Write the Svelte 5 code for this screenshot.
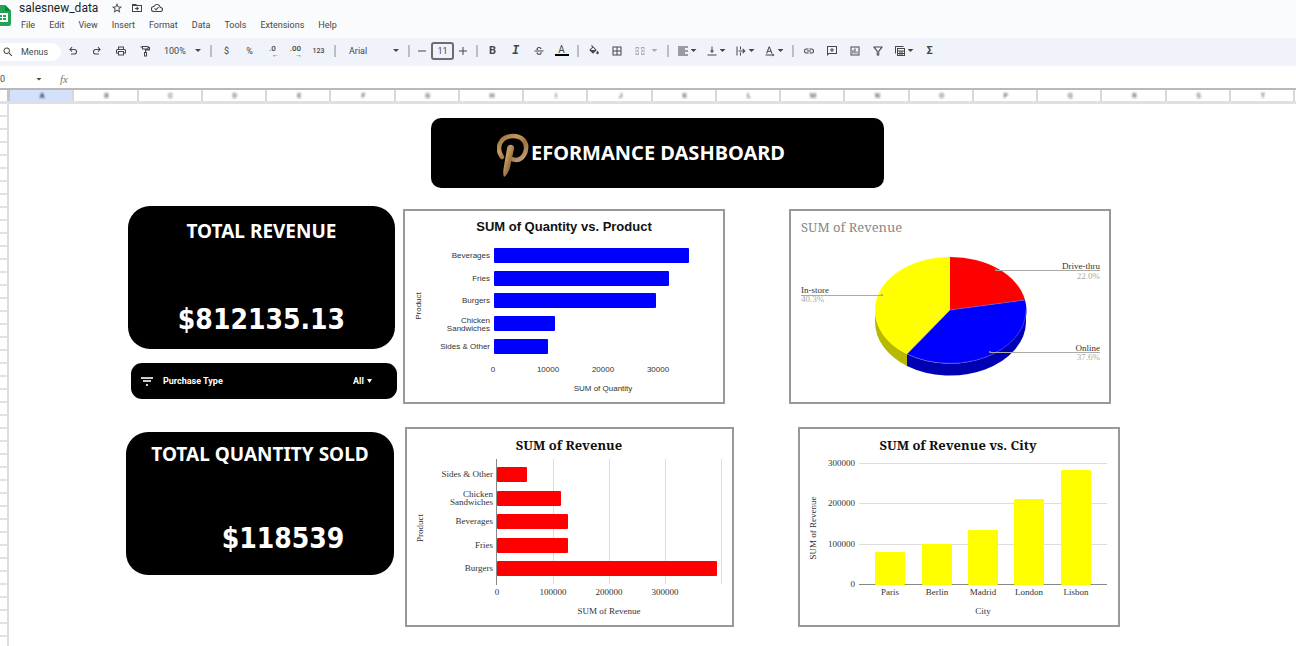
<script>
  const menus = ['File', 'Edit', 'View', 'Insert', 'Format', 'Data', 'Tools', 'Extensions', 'Help'];
  const columns = 'ABCDEFGHIJKLMNOPQRST'.split('');
  const rows = Array.from({ length: 42 }, (_, i) => i + 1);

  const icons = {
    undo: 'M8 19v-2h6.5a3.6 3.6 0 0 0 0-7.2H8l2.900 2.900L9.500 14 4.300 8.800 9.500 3.600l1.400 1.400L8 7.800h6.500a5.600 5.600 0 0 1 0 11.200z',
    redo: 'M16 19v-2H9.500a3.600 3.600 0 0 1 0-7.200H16l-2.900 2.900 1.400 1.300 5.200-5.200-5.200-5.200-1.400 1.400L16 7.800H9.500a5.600 5.600 0 0 0 0 11.200z',
    print: 'M19 8h-1V3H6v5H5a3 3 0 0 0-3 3v6h4v4h12v-4h4v-6a3 3 0 0 0-3-3zM8 5h8v3H8zm8 14H8v-5h8zm4-4h-2v-3H6v3H4v-4a1 1 0 0 1 1-1h14a1 1 0 0 1 1 1z',
    paint: 'M3 3h3V2h13v2h3v7h-8v3h2v9h-6v-9h2V9h8V6h-1v3H6V5H3zm5 1v3h9V4zm4 12v5h2v-5z',
    strike: 'M3 11h18v2H3z M7 9a4.500 4.500 0 0 1 5-5c3 0 4.800 1.500 5 4h-2.500c-.2-1.300-1-2-2.500-2-1.600 0-2.500.8-2.500 2 0 .8.300 1.300 1 2H7.200zM7 15h2.500c.2 1.800 1.200 2.500 2.700 2.500 1.700 0 2.600-.8 2.600-2l-.2-1h2.500c.5 3.200-1.500 5.200-4.900 5.200-3.200 0-5-1.700-5.200-4.700z',
    fill: 'M16.600 9 7.600 0 6.200 1.400l2.400 2.400-5.200 5.100a1.500 1.500 0 0 0 0 2.200l5.500 5.500a1.500 1.500 0 0 0 2.200 0l5.500-5.500a1.500 1.500 0 0 0-.1-2.100zM5.200 10 10 5.200l4.800 4.800zM19 11.500s-2.500 2.700-2.500 4.500a2.500 2.500 0 0 0 5 0c0-1.800-2.500-4.500-2.500-4.500z',
    borders: 'M3 3v18h18V3zm8 16H5v-6h6zm0-8H5V5h6zm8 8h-6v-6h6zm0-8h-6V5h6z',
    merge: 'M3 4h7v5H8V6H5v3H3zm11 0h7v5h-2V6h-3v3h-2zM3 15h2v3h3v-3h2v5H3zm16 0h2v5h-7v-5h2v3h3zM2 11h5V9l3 3-3 3v-2H2zm20 0h-5V9l-3 3 3 3v-2h5z',
    align: 'M2 3h20v2H2zm0 4h14v2H2zm0 4h20v2H2zm0 4h14v2H2zm0 4h20v2H2z',
    valign: 'M16 11h-3V3h-2v8H8l4 5zM3 19v2h18v-2z',
    wrap: 'M3 3h2v18H3zm7 0h2v6h-2zm0 12h2v6h-2zM7 11h10l-2.500-2.500L16 7l5 5-5 5-1.500-1.500L17 13H7z',
    rotate: 'M4 17 9.500 3h2L17 17h-2.300l-1.300-3.500H7.600L6.300 17zm4.300-5.500h4.400l-2.200-6zM3 19h14v-2l4 3-4 3v-2H3z',
    link: 'M3.900 12A3.100 3.100 0 0 1 7 8.900h4V7H7a5 5 0 0 0 0 10h4v-1.900H7A3.100 3.100 0 0 1 3.900 12zM8 13h8v-2H8zm9-6h-4v1.900h4a3.100 3.100 0 0 1 0 6.200h-4V17h4a5 5 0 0 0 0-10z',
    comment: 'M2 2h20v16H6l-4 4zm2 2v13l1-1h15V4zm7 2h2v3h3v2h-3v3h-2v-3H8V9h3z',
    chart: 'M3 3h18v18H3zm2 2v14h14V5zm2 5h2v7H7zm4-3h2v10h-2zm4 6h2v4h-2z',
    filter: 'M3 3h18v2l-6.500 8v8h-5v-8L3 5zm3 2 5.500 7v7h1v-7L18 5z',
    views: 'M2 2h17v2H4v13H2zm4 4h16v16H6zm2 2v3h12V8zm0 5v3h3v-3zm5 0v3h2v-3zm4 0v3h3v-3zm-9 5v2h3v-2zm5 0v2h2v-2zm4 0v2h3v-2z',
    star: 'm12 2 3 6.800 7.200.6-5.500 4.800 1.700 7.200-6.400-3.900-6.400 3.900 1.700-7.200L1.800 9.400 9 8.800zm0 4.700-1.700 3.800-4 .4 3 2.700-.9 4 3.600-2.200 3.600 2.200-.9-4 3-2.700-4-.4z',
    move: 'M2 4h8l2 2h10v14H2zm2 4v10h16V8zm8 1 4 4-4 4-1.400-1.400L12 14H8v-2h4l-1.400-1.600z',
    cloud: 'M19.400 10A7.500 7.500 0 0 0 5.400 8 6 6 0 0 0 6 20h13a5 5 0 0 0 .4-10zM19 18H6a4 4 0 0 1-.4-8l1.100-.1.500-1A5.500 5.500 0 0 1 17.400 10.400l.3 1.500 1.500.1A3 3 0 0 1 19 18zm-9-3.800-2.100-2.100-1.400 1.400L10 17l6-6-1.400-1.400z',
    search: 'M15.500 14h-.8l-.3-.3a6.500 6.500 0 1 0-.7.7l.3.300v.8l5 5 1.500-1.500zm-6 0a4.500 4.500 0 1 1 0-9 4.500 4.500 0 0 1 0 9z'
  };

  const quantity = [
    { lines: ['Beverages'], y: 39, w: 195 },
    { lines: ['Fries'], y: 62, w: 175 },
    { lines: ['Burgers'], y: 84, w: 162 },
    { lines: ['Chicken', 'Sandwiches'], y: 107, w: 61 },
    { lines: ['Sides & Other'], y: 130, w: 54 }
  ];
  const revenue = [
    { lines: ['Sides & Other'], y: 40, w: 30 },
    { lines: ['Chicken', 'Sandwiches'], y: 64, w: 64 },
    { lines: ['Beverages'], y: 87, w: 71 },
    { lines: ['Fries'], y: 111, w: 71 },
    { lines: ['Burgers'], y: 134, w: 220 }
  ];
  const cities = [
    { name: 'Paris', x: 77, top: 125 },
    { name: 'Berlin', x: 124, top: 117 },
    { name: 'Madrid', x: 170, top: 103 },
    { name: 'London', x: 216, top: 72 },
    { name: 'Lisbon', x: 263, top: 43 }
  ];
</script>

{#snippet icon(name)}
  <svg class="icon" viewBox="0 0 24 24" aria-hidden="true"><path fill-rule="evenodd" d={icons[name]} /></svg>
{/snippet}

{#snippet drop(name, label)}
  <button class="drop" aria-label={label}>{@render icon(name)}<i class="caret"></i></button>
{/snippet}

<header>
  <div class="top">
    <svg class="logo" viewBox="0 0 11 22" aria-hidden="true">
      <path d="M0 0h5l6 6v13a2 2 0 0 1-2 2H0z" fill="#23a455" />
      <path d="M5 0l6 6H5z" fill="#12813c" />
      <path d="M0 8h8v9H0v-2h2v-2H0v-1h2v-2H0zM3 10v2h3v-2zm0 3v2h3v-2z" fill="#fff" fill-rule="evenodd" />
    </svg>
    <div class="heads">
      <div class="file">
        <h1>salesnew_data</h1>
        <button aria-label="Star">{@render icon('star')}</button>
        <button aria-label="Move">{@render icon('move')}</button>
        <button aria-label="Saved to Drive">{@render icon('cloud')}</button>
      </div>
      <nav>
        {#each menus as item}<button>{item}</button>{/each}
      </nav>
    </div>
  </div>

  <div class="toolbar">
    <label class="search">{@render icon('search')}<input aria-label="Menus" placeholder="Menus" /></label>
    <button class="wide" aria-label="Undo">{@render icon('undo')}</button>
    <button class="wide" aria-label="Redo">{@render icon('redo')}</button>
    <button class="wide" aria-label="Print">{@render icon('print')}</button>
    <button class="wide" aria-label="Paint format">{@render icon('paint')}</button>
    <span class="pick zoom"><select aria-label="Zoom"><option>100%</option></select><i class="caret"></i></span>
    <i class="sep"></i>
    <button>$</button>
    <button>%</button>
    <button class="dec" aria-label="Decrease decimal places"><span>.0</span><small>←</small></button>
    <button class="dec" aria-label="Increase decimal places"><span>.00</span><small>→</small></button>
    <button class="num">123</button>
    <i class="sep"></i>
    <span class="pick font"><select aria-label="Font"><option>Arial</option></select><i class="caret"></i></span>
    <i class="sep"></i>
    <button class="step" aria-label="Decrease font size"><svg class="icon" viewBox="0 0 24 24"><path d="M4 11h16v2H4z" /></svg></button>
    <input class="size" aria-label="Font size" value="11" />
    <button class="step" aria-label="Increase font size"><svg class="icon" viewBox="0 0 24 24"><path d="M4 11h7V4h2v7h7v2h-7v7h-2v-7H4z" /></svg></button>
    <i class="sep"></i>
    <button class="bold">B</button>
    <button class="italic">I</button>
    <button aria-label="Strikethrough">{@render icon('strike')}</button>
    <button class="color"><span>A</span></button>
    <i class="sep"></i>
    <button aria-label="Fill color">{@render icon('fill')}</button>
    <button aria-label="Borders">{@render icon('borders')}</button>
    <button class="drop merge" aria-label="Merge cells">{@render icon('merge')}<i class="caret"></i></button>
    <i class="sep"></i>
    {@render drop('align', 'Horizontal align')}
    {@render drop('valign', 'Vertical align')}
    {@render drop('wrap', 'Text wrapping')}
    {@render drop('rotate', 'Text rotation')}
    <i class="sep"></i>
    <button aria-label="Insert link">{@render icon('link')}</button>
    <button aria-label="Insert comment">{@render icon('comment')}</button>
    <button aria-label="Insert chart">{@render icon('chart')}</button>
    <button aria-label="Create a filter">{@render icon('filter')}</button>
    {@render drop('views', 'Table views')}
    <button class="bold">Σ</button>
  </div>

  <div class="formula">
    <input class="cell" aria-label="Name box" value="0" />
    <i class="caret"></i>
    <label for="fx">fx</label>
    <input id="fx" />
  </div>
</header>

<div class="letters">
  <span class="corner"></span>
  {#each columns as c, i}<span class="letter" class:active={i === 0}><b>{c}</b></span>{/each}
</div>

<div class="sheet">
  <div class="numbers">{#each rows as r (r)}<i></i>{/each}</div>
  <main>
    <section class="row banner-row">
      <h2 class="banner">
        <svg viewBox="0 0 32 46" role="img" aria-label="P">
          <defs>
            <linearGradient id="gold" x1="0" y1="0" x2="1" y2="1">
              <stop offset="0" stop-color="#9a6f3c" />
              <stop offset=".35" stop-color="#c39a5f" />
              <stop offset=".6" stop-color="#9c7141" />
              <stop offset="1" stop-color="#c8a585" />
            </linearGradient>
          </defs>
          <path d="M5 24C-1 16 2 3 16 3c9 0 14 6 13 13-1 8-7 13-14 10" fill="none" stroke="url(#gold)" stroke-width="4.500" stroke-linecap="round" />
          <path d="M10 15c1-5 8-4 7 1l-4 18c-1 5-4 9-6 10-1-2-1-7 0-11z" fill="url(#gold)" />
        </svg>
        <span>EFORMANCE DASHBOARD</span>
      </h2>
    </section>

    <section class="row first">
      <div class="side">
        <article class="card">
          <h3>TOTAL REVENUE</h3>
          <p>$812135.13</p>
        </article>
        <div class="slicer">
          <svg viewBox="0 0 12 9" aria-hidden="true"><path d="M0 0h12v2H0zM2 3h8v2H2zM5 7h2v2H5z" /></svg>
          <label for="purchase">Purchase Type</label>
          <span class="choice"><select id="purchase"><option>All</option></select><i class="caret"></i></span>
        </div>
      </div>

      <figure class="mid">
        <svg class="sans" viewBox="0 0 322 195">
          <text class="title" x="161" y="22" text-anchor="middle">SUM of Quantity vs. Product</text>
          {#each quantity as b}
            <rect x="91" y={b.y} width={b.w} height="15" rx="1" fill="#00f" />
            {#each b.lines as line, i}
              <text x="87" y={b.y + (b.lines.length > 1 ? 7 + i * 8 : 10)} text-anchor="end">{line}</text>
            {/each}
          {/each}
          {#each [0, 10000, 20000, 30000] as t, i}
            <text x={90 + i * 55} y="163" text-anchor="middle">{t}</text>
          {/each}
          <text x="200" y="182" text-anchor="middle">SUM of Quantity</text>
          <text transform="translate(18 97) rotate(-90)" text-anchor="middle">Product</text>
        </svg>
      </figure>

      <figure class="end">
        <svg class="serif" viewBox="0 0 322 195">
          <text class="light" x="12" y="23">SUM of Revenue</text>
          <path d="M86 101A76 54 0 0 0 118 145V157A76 54 0 0 1 86 113z" fill="#b8b800" />
          <path d="M118 145A76 54 0 0 0 237 101V113A76 54 0 0 1 118 157z" fill="#0000b3" />
          <path d="M161 101V48A76 53 0 0 1 236 91z" fill="#f00" />
          <path d="M161 101L236 91A76 53 0 0 1 118 145z" fill="#00f" />
          <path d="M161 101L118 145C98 136 86 119 86 101A75 53 0 0 1 161 48z" fill="#ff0" />
          <path d="M161 101L236 91M161 101L118 145M118 145A76 53 0 0 0 237 101" fill="none" stroke="#77c" stroke-width=".5" />
          <g stroke="#aaa">
            <path d="M207 61.500H311M201 143.500H311M12 86.500H93" />
          </g>
          <g fill="#999"><circle cx="207" cy="61" r="1" /><circle cx="201" cy="143" r="1" /><circle cx="93" cy="86" r="1" /></g>
          <text x="311" y="60" text-anchor="end">Drive-thru</text>
          <text class="muted" x="311" y="70" text-anchor="end">22.0%</text>
          <text x="12" y="84">In-store</text>
          <text class="muted" x="12" y="93">40.3%</text>
          <text x="311" y="142" text-anchor="end">Online</text>
          <text class="muted" x="311" y="151" text-anchor="end">37.6%</text>
        </svg>
      </figure>
    </section>

    <section class="row second">
      <article class="card side">
        <h3>TOTAL QUANTITY SOLD</h3>
        <p class="shifted">$118539</p>
      </article>

      <figure class="mid">
        <svg class="serif" viewBox="0 0 329 200">
          <text class="title" x="164" y="23" text-anchor="middle">SUM of Revenue</text>
          {#each [148, 204, 260, 316] as x}<path d="M{x}.500 32V157" stroke="#ddd" />{/each}
          {#each revenue as b}
            <rect x="92" y={b.y} width={b.w} height="15" rx="1" fill="#f00" />
            {#each b.lines as line, i}
              <text x="88" y={b.y + (b.lines.length > 1 ? 6 + i * 8 : 10)} text-anchor="end">{line}</text>
            {/each}
          {/each}
          <path d="M91.500 32V158" stroke="#888" />
          {#each [0, 100000, 200000, 300000] as t, i}
            <text x={92 + i * 56} y="168" text-anchor="middle">{t}</text>
          {/each}
          <text x="204" y="187" text-anchor="middle">SUM of Revenue</text>
          <text transform="translate(18 101) rotate(-90)" text-anchor="middle">Product</text>
        </svg>
      </figure>

      <figure class="end">
        <svg class="serif" viewBox="0 0 322 200">
          <text class="title" x="160" y="23" text-anchor="middle">SUM of Revenue vs. City</text>
          {#each [300000, 200000, 100000, 0] as t, i}
            <path d="M61 {36.5 + Math.floor(i * 40.5)}H309" stroke={t ? '#ddd' : '#888'} />
            <text x="57" y={39 + Math.floor(i * 40.5)} text-anchor="end">{t}</text>
          {/each}
          {#each cities as c}
            <rect x={c.x} y={c.top} width="30" height={158 - c.top} rx="1" fill="#ff0" />
            <text x={c.x + 15} y="168" text-anchor="middle">{c.name}</text>
          {/each}
          <text x="185" y="187" text-anchor="middle">City</text>
          <text transform="translate(18 101) rotate(-90)" text-anchor="middle">SUM of Revenue</text>
        </svg>
      </figure>
    </section>
  </main>
</div>

<style>
  :global(body) { background: #fff; font-family: Roboto, sans-serif; overflow-x: hidden; }
  * { box-sizing: border-box; }
  button, input, select { font: inherit; color: inherit; background: none; border: 0; padding: 0; margin: 0; outline: 0; }
  select { appearance: none; }
  h1, h2, h3, p, figure { margin: 0; }
  svg { display: block; }
  header { background: #f9fbfd; color: #444746; }
  .icon { width: 12px; height: 12px; fill: #444746; flex: none; }
  .caret { width: 6px; height: 3px; background: #444746; clip-path: polygon(0 0, 100% 0, 50% 100%); flex: none; }

  .top { display: flex; height: 38px; }
  .logo { width: 11px; height: 22px; margin-top: 5px; }
  .heads { padding-left: 8px; }
  .file { display: flex; align-items: center; height: 16px; }
  .file button { margin-left: 8px; }
  .file h1 { font: 400 12px/16px Roboto, sans-serif; color: #1f1f1f; margin-right: 5px; }
  nav { display: flex; gap: 14px; padding-left: 2px; }
  nav button { font-size: 9px; line-height: 18px; }

  .toolbar { display: flex; align-items: center; height: 28px; background: #f0f3fa; padding-bottom: 3px; font-size: 9px; }
  .toolbar button { width: 23px; height: 18px; flex: none; display: flex; align-items: center; justify-content: center; }
  .toolbar .wide { width: 24px; }
  .toolbar .step { width: 18px; }
  .search { width: 61px; height: 18px; margin-top: 3px; padding-left: 2px; background: #fff; border-radius: 0 9px 9px 0; display: flex; align-items: center; gap: 7px; flex: none; }
  .search input { width: 36px; }
  .search input::placeholder { color: #444746; opacity: 1; }
  .pick { display: flex; align-items: center; flex: none; padding-right: 5px; }
  .pick select { flex: 1; min-width: 0; }
  .zoom { width: 49px; padding-left: 7px; }
  .font { width: 65px; padding-left: 10px; }
  .sep { width: 9px; height: 12px; flex: none; background: linear-gradient(#bbbec4, #bbbec4) center / 2px 100% no-repeat; }
  .dec { font-size: 8px; line-height: 8px; font-weight: 500; }
  .toolbar .dec { flex-direction: column; align-items: center; }
  .dec small { font-size: 7px; line-height: 4px; align-self: flex-end; padding-right: 5px; }
  .num { font-size: 7px; font-weight: 500; }
  .size { width: 23px; height: 18px; border: 2px solid #6b6e70; border-radius: 3px; text-align: center; }
  .bold { font-weight: 700; font-size: 11px; }
  .italic { font: italic 700 12px "Liberation Mono", monospace; }
  .color span { font-size: 10px; line-height: 9px; width: 14px; border-bottom: 2px solid #000; }
  .toolbar .drop { width: 29px; gap: 2px; }
  .toolbar .merge { width: 35px; gap: 6px; opacity: .4; }

  .formula { display: flex; align-items: center; height: 22px; background: #fff; font-size: 9px; padding-top: 4px; }
  .formula .cell { width: 36px; }
  .formula label { font: italic 11px "Liberation Serif", serif; color: #777; padding-left: 18px; }
  .formula #fx { flex: 1; padding-left: 8px; }

  .letters { display: flex; height: 16px; border-top: 2px solid #b9b9b9; border-bottom: 3px solid #e0e0e0; padding-right: 1px; }
  .corner { width: 10px; flex: none; border-right: 3px solid #c4c4c4; }
  .letter { flex: 1; border-right: 2px solid #d8d8d8; padding-left: 2px; text-align: center; font: 7px/12px Roboto, sans-serif; color: #666; }
  .letter b { filter: blur(1px); display: block; }
  .letter.active { background: #d3e1fb; color: #123; }

  .sheet { display: flex; }
  .numbers { width: 9px; flex: none; border-right: 2px solid #ddd; height: 542px; overflow: hidden; }
  .numbers i { display: block; height: 13px; border-bottom: 2px solid #e2e2e2; }
  main { flex: 1; min-width: 0; padding-top: 14px; }
  .row { display: grid; align-items: start; }
  .banner-row { grid-template-columns: 422fr 453fr 412fr; }
  .first { grid-template-columns: 119fr 267fr 8fr 322fr 64fr 322fr 185fr; margin-top: 18px; }
  .second { grid-template-columns: 117fr 268fr 11fr 329fr 64fr 322fr 176fr; margin-top: 23px; }
  .side { grid-column: 2; }
  .mid { grid-column: 4; }
  .end { grid-column: 6; }
  figure { outline: 2px solid #999; outline-offset: -2px; background: #fff; }
  .first figure { margin-top: 3px; }
  figure svg { width: 100%; }
  .second .side { margin-top: 5px; }

  .banner { grid-column: 2; height: 70px; background: #000; color: #fff; border-radius: 10px; display: flex; align-items: center; justify-content: center; padding-right: 33px; gap: 2px; font: 700 20px/30px "Noto Sans", sans-serif; }
  .banner svg { width: 32px; height: 46px; margin-top: 5px; }
  .banner span { white-space: nowrap; }
  .card { height: 143px; background: #000; color: #fff; border-radius: 22px; text-align: center; padding-top: 10px; white-space: nowrap; }
  .card h3 { font: 700 19px/30px "Noto Sans", sans-serif; }
  .card p { font: 700 28px/40px "DejaVu Sans Condensed", "DejaVu Sans", sans-serif; padding-top: 54px; }
  .card .shifted { padding: 50px 0 0 46px; }
  .second .card { padding-top: 7px; }
  .slicer { display: flex; align-items: center; height: 36px; margin: 14px -2px 0 3px; padding: 0 25px 0 10px; background: #000; color: #fff; border-radius: 11px; font: 700 9px/12px Roboto, sans-serif; }
  .slicer svg { width: 12px; height: 9px; fill: #ccc; }
  .slicer label { flex: 1; padding-left: 10px; }
  .choice { display: flex; align-items: center; gap: 3px; }
  .choice .caret { width: 5px; height: 4px; background: #fff; }

  figure text { fill: #333; font-size: 8px; }
  .sans { font-family: "Liberation Sans", sans-serif; }
  .serif text { font-family: "Liberation Serif", serif; font-size: 9px; }
  figure .title { font-size: 13px; font-weight: 700; fill: #111; }
  .serif .title, .serif .light { font-family: "Noto Serif", "DejaVu Serif Condensed", "DejaVu Serif", serif; font-size: 13px; }
  .serif .light { fill: #888; }
  .serif .muted { fill: #aaa; }
</style>
